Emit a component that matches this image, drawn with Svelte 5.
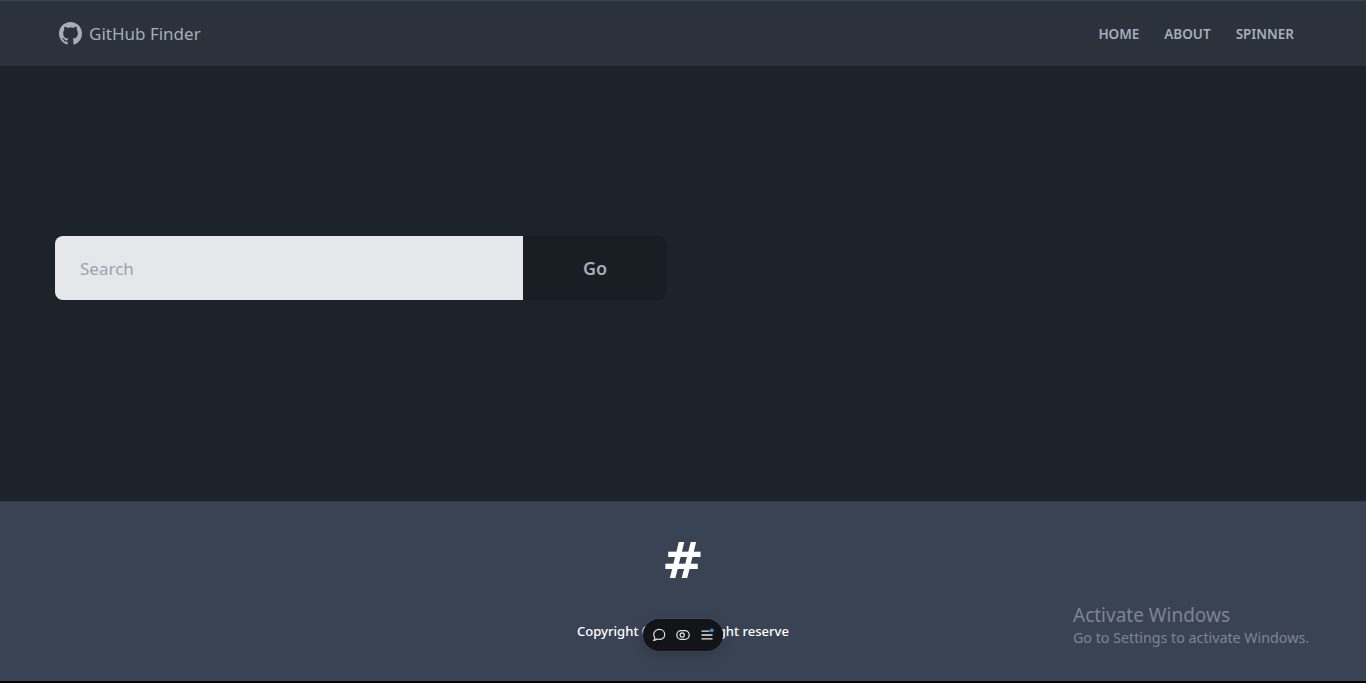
<script>
  const links = ['HOME', 'ABOUT', 'SPINNER'];
</script>

<div class="page">
  <nav class="nav">
    <a class="brand" href="#top">
      <svg class="mark" viewBox="0 0 16 16" width="23" height="23" aria-hidden="true">
        <path fill="currentColor" d="M8 0C3.58 0 0 3.58 0 8c0 3.54 2.29 6.53 5.47 7.59.4.07.55-.17.55-.38 0-.19-.01-.82-.01-1.49-2.01.37-2.53-.49-2.69-.94-.09-.23-.48-.94-.82-1.13-.28-.15-.68-.52-.01-.53.63-.01 1.08.58 1.23.82.72 1.21 1.87.87 2.33.66.07-.52.28-.87.51-1.07-1.78-.2-3.64-.89-3.64-3.95 0-.87.31-1.59.82-2.15-.08-.2-.36-1.02.08-2.12 0 0 .67-.21 2.2.82.64-.18 1.32-.27 2-.27s1.36.09 2 .27c1.53-1.04 2.2-.82 2.2-.82.44 1.1.16 1.92.08 2.12.51.56.82 1.27.82 2.15 0 3.07-1.87 3.75-3.65 3.95.29.25.54.73.54 1.48 0 1.07-.01 1.93-.01 2.2 0 .21.15.46.55.38A8.01 8.01 0 0 0 16 8c0-4.42-3.58-8-8-8z"/>
      </svg>
      <span>GitHub Finder</span>
    </a>
    <ul class="links">
      {#each links as link}
        <li><a href="#top">{link}</a></li>
      {/each}
    </ul>
  </nav>

  <main class="main">
    <form class="search" onsubmit={(e) => e.preventDefault()}>
      <input type="text" placeholder="Search" />
      <button type="submit">Go</button>
    </form>
  </main>

  <footer class="footer">
    <div class="hash">#</div>
    <p>Copyright © 2023 All right reserve</p>

    <div class="pill">
      <svg viewBox="0 0 16 16" width="16" height="16" fill="none" stroke="currentColor" stroke-width="1.2" aria-hidden="true">
        <path d="M8.300 2.400c3.100 0 5.400 2.200 5.400 5s-2.300 5-5.400 5c-.8 0-1.500-.1-2.200-.4-.9.8-2 1.300-3.200 1.400.6-.8.9-1.700.9-2.600C3.300 9.900 2.700 8.700 2.700 7.400c0-2.800 2.500-5 5.600-5z"/>
      </svg>
      <svg viewBox="0 0 16 16" width="16" height="16" fill="none" stroke="currentColor" stroke-width="1.2" aria-hidden="true">
        <rect x="1.800" y="3.700" width="12.400" height="8.600" rx="4.300"/>
        <circle cx="7.200" cy="8" r="2.100"/>
      </svg>
      <svg viewBox="0 0 16 16" width="16" height="16" fill="none" stroke="currentColor" stroke-width="1.300" aria-hidden="true">
        <path d="M2.500 4.200h8M2.500 8h11M2.500 11.800h11"/>
        <circle cx="12.800" cy="3.300" r="1.900" fill="#3b8cf0" stroke="none"/>
      </svg>
    </div>

    <div class="watermark">
      <div class="wm-title">Activate Windows</div>
      <div class="wm-sub">Go to Settings to activate Windows.</div>
    </div>
  </footer>
</div>

<style>
  :global(body) {
    margin: 0;
    background: #000;
  }
  .page {
    display: flex;
    flex-direction: column;
    height: 681px;
    overflow: hidden;
    font-family: "Noto Sans", "Open Sans", sans-serif;
    border-top: 1px solid #2f4a46;
    box-sizing: border-box;
  }
  .nav {
    height: 65px;
    flex: none;
    display: flex;
    align-items: center;
    justify-content: space-between;
    background: #2b323c;
    padding: 0 72px 0 59px;
    box-sizing: border-box;
    box-shadow: 0 1px 2px rgba(0, 0, 0, .1);
    position: relative;
    z-index: 1;
  }
  .brand {
    display: flex;
    align-items: center;
    gap: 7px;
    color: #a6adbb;
    font-size: 17px;
    text-decoration: none;
  }
  .mark {
    display: block;
  }
  .links {
    display: flex;
    gap: 25px;
    list-style: none;
    margin: 0 0 2px;
    padding: 0;
  }
  .links a {
    color: #a6adbb;
    font-size: 13.5px;
    font-weight: 600;
    text-decoration: none;
  }
  .main {
    flex: 1;
    background: #1d232a;
    padding: 170px 55px 0;
    box-sizing: border-box;
  }
  .search {
    display: flex;
    width: 612px;
    height: 64px;
    background: #333a44;
    border-radius: 8px;
  }
  .search input {
    width: 468px;
    height: 64px;
    border: 0;
    outline: 0;
    box-sizing: border-box;
    padding: 0 25px;
    background: #e5e7eb;
    border-radius: 8px 0 0 8px;
    font: 17px "Noto Sans", "Open Sans", sans-serif;
    color: #1f2937;
  }
  .search input::placeholder {
    color: #9ca3af;
    opacity: 1;
  }
  .search button {
    width: 144px;
    height: 64px;
    border: 0;
    background: #191e24;
    border-radius: 0 8px 8px 0;
    color: #a6adbb;
    font: 600 18px "Noto Sans", "Open Sans", sans-serif;
  }
  .footer {
    height: 180px;
    flex: none;
    background: #3a4354;
    color: #fff;
    position: relative;
    display: flex;
    flex-direction: column;
    align-items: center;
    box-shadow: inset 0 1px 0 #343d4b;
    padding-top: 30px;
    box-sizing: border-box;
  }
  .hash {
    font-family: "DejaVu Sans", sans-serif;
    font-size: 50px;
    line-height: 60px;
    font-weight: 700;
  }
  .footer p {
    margin: 30px 0 0;
    font-family: "Noto Sans", sans-serif;
    font-size: 13.1px;
    line-height: 20px;
    font-weight: 500;
  }
  .pill {
    position: absolute;
    left: 643px;
    top: 118px;
    width: 80px;
    height: 32px;
    box-sizing: border-box;
    display: flex;
    align-items: center;
    justify-content: center;
    gap: 8px;
    background: #121418;
    color: #e2e4e8;
    border-radius: 16px;
    box-shadow: 0 0 0 1px rgba(255, 255, 255, .05), 0 4px 14px rgba(0, 0, 0, .18);
  }
  .watermark {
    position: absolute;
    left: 1073px;
    top: 102px;
    font-family: "Noto Sans", "Open Sans", sans-serif;
    color: rgba(255, 255, 255, .36);
    white-space: nowrap;
  }
  .wm-title {
    font-size: 19px;
    line-height: 24px;
  }
  .wm-sub {
    font-size: 14.25px;
    line-height: 21px;
  }
</style>
